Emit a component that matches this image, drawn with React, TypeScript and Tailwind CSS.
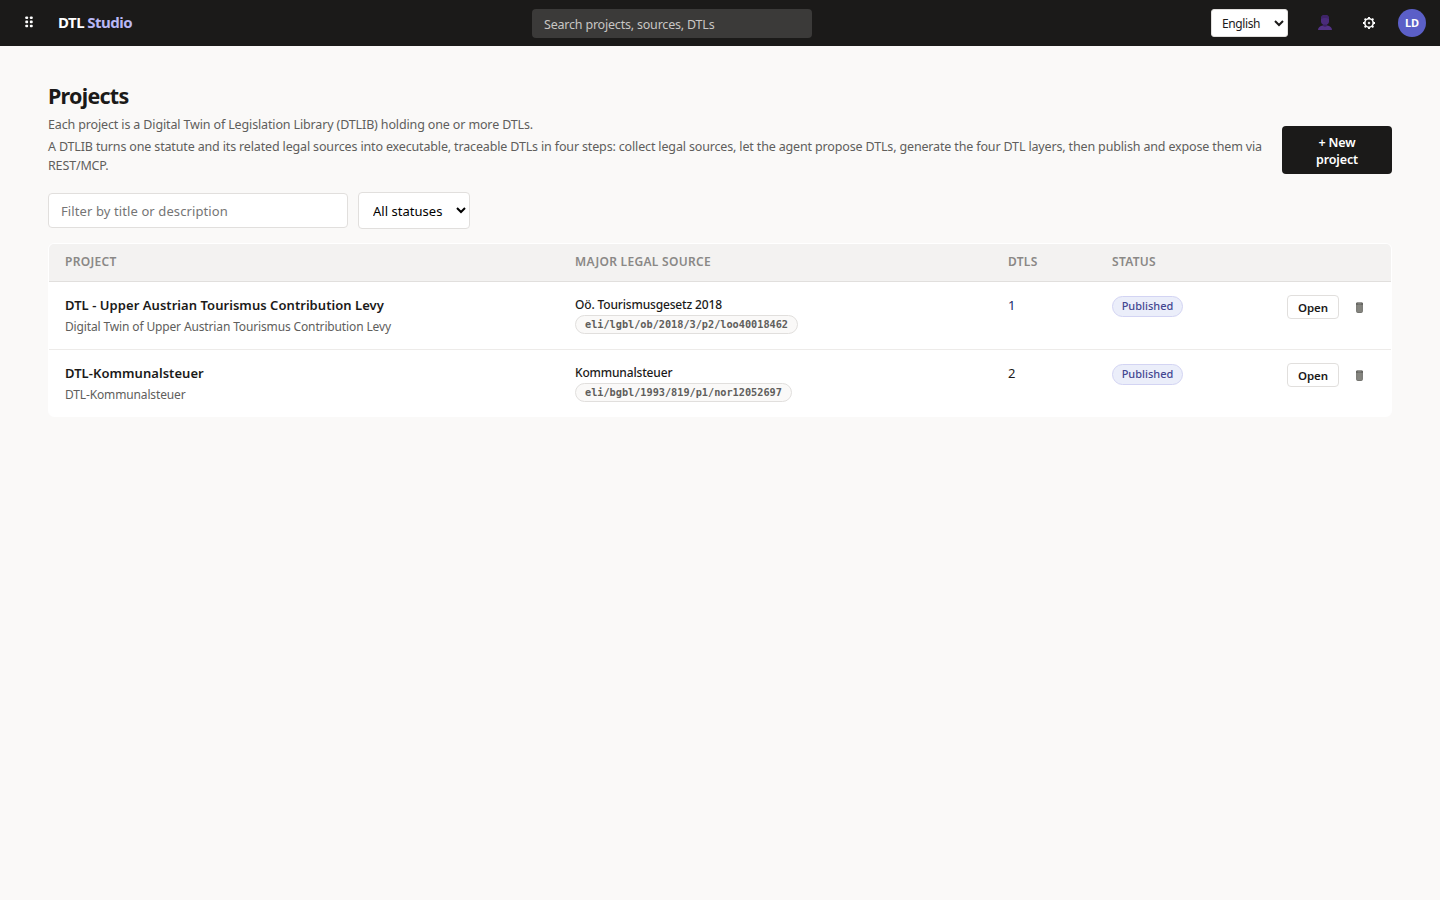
import React, { useState } from 'react'

const projects = [
  {
    id: 1,
    title: 'DTL - Upper Austrian Tourismus Contribution Levy',
    description: 'Digital Twin of Upper Austrian Tourismus Contribution Levy',
    source: 'Oö. Tourismusgesetz 2018',
    eli: 'eli/lgbl/ob/2018/3/p2/loo40018462',
    dtls: 1,
    status: 'Published',
  },
  {
    id: 2,
    title: 'DTL-Kommunalsteuer',
    description: 'DTL-Kommunalsteuer',
    source: 'Kommunalsteuer',
    eli: 'eli/bgbl/1993/819/p1/nor12052697',
    dtls: 2,
    status: 'Published',
  },
]

const GridIcon = () => (
  <svg width="8" height="12" viewBox="0 0 8 12" fill="#fff">
    <rect x="0.3" y="0.5" width="2.8" height="2.6" rx="0.8" />
    <rect x="4.9" y="0.5" width="2.8" height="2.6" rx="0.8" />
    <rect x="0.3" y="4.6" width="2.8" height="2.6" rx="0.8" />
    <rect x="4.9" y="4.6" width="2.8" height="2.6" rx="0.8" />
    <rect x="0.3" y="8.7" width="2.8" height="2.6" rx="0.8" />
    <rect x="4.9" y="8.7" width="2.8" height="2.6" rx="0.8" />
  </svg>
)

const UserIcon = () => (
  <svg width="14" height="15" viewBox="0 0 14 15">
    <path d="M0 15c0-2.6 2.2-4 4.6-4.4h4.8C11.8 11 14 12.4 14 15z" fill="#533285" />
    <path d="M5 8h4v3c-1 1-3 1-4 0z" fill="#3b2064" />
    <rect x="3" y="0" width="8" height="9.6" rx="3.4" fill="#4a2b7a" />
    <path d="M3 4c0-3 1.6-4 4-4s4 1 4 4c-2-1.5-6-1.5-8 0z" fill="#3f2469" />
  </svg>
)

const GearIcon = () => (
  <svg width="12" height="12" viewBox="0 0 12 12" fill="none" stroke="#fff">
    <circle cx="6" cy="6" r="4.2" strokeWidth="1.6" />
    <circle cx="6" cy="6" r="1" fill="#fff" strokeWidth="0.4" />
    <path
      d="M6 0v1.8M6 10.2v1.8M0 6h1.8M10.2 6h1.8M1.6 1.6l1.3 1.3M9.1 9.1l1.3 1.3M1.6 10.4l1.3-1.3M9.1 2.9l1.3-1.3"
      strokeWidth="1.9"
    />
  </svg>
)

const TrashIcon = () => (
  <svg width="7" height="11" viewBox="0 0 7 11">
    <path d="M0.6 1.2h5.8v8.4q0 0.9-0.9 0.9h-4q-0.9 0-0.9-0.9z" fill="#85857f" stroke="#6b6b67" strokeWidth="0.9" />
    <path d="M0.2 1.3q0-0.9 0.9-0.9h4.8q0.9 0 0.9 0.9v1.8h-6.6z" fill="#5f5f5b" />
    <path d="M1.5 1.9h4" stroke="#a5a5a0" strokeWidth="0.7" />
  </svg>
)

const App = () => {
  const [search, setSearch] = useState('')
  const [filter, setFilter] = useState('')

  const rows = projects.filter((p) =>
    (p.title + p.description).toLowerCase().includes(filter.toLowerCase())
  )

  return (
    <div className="min-h-screen bg-[#faf9f8] font-['Noto_Sans',sans-serif] text-[#1b1a19]">
      {/* top bar */}
      <header className="flex h-[46px] items-center bg-[#1b1a19] pl-[25px] pr-[14px]">
        <button className="mt-[-2px]">
          <GridIcon />
        </button>
        <div className="ml-[25px] w-[474px] whitespace-nowrap pb-0.5 text-[15px] font-bold leading-5 tracking-[-0.53px] text-white">
          DTL <span className="text-[#b9b8f5]">Studio</span>
        </div>
        <input
          value={search}
          onChange={(e) => setSearch(e.target.value)}
          placeholder="Search projects, sources, DTLs"
          className="mt-px h-[29px] w-[280px] rounded-[4px] bg-[#3b3a39] px-3 pt-px text-[12.5px] tracking-[-0.2px] text-white outline-none placeholder:text-[#c8c6c4]"
        />
        <select className="ml-auto h-7 w-[77px] rounded-[3px] border border-[#e1dfdd] bg-white px-1.5 pt-px text-[12px] tracking-[-0.4px] text-[#1b1a19]">
          <option>English</option>
          <option>Deutsch</option>
        </select>
        <button className="ml-[30px] mt-[-1px]">
          <UserIcon />
        </button>
        <button className="ml-[31px] mt-[-1px]">
          <GearIcon />
        </button>
        <div className="ml-[23px] flex h-7 w-7 items-center justify-center rounded-full bg-[#5b5fc7] pt-px text-[11px] font-bold tracking-[-0.2px] text-white">
          LD
        </div>
      </header>

      <main className="px-12 pt-[35px]">
        <div className="flex items-center justify-between">
          <div className="w-[1218px]">
            <h1 className="text-[21.5px] font-bold leading-[30px] tracking-[-0.75px]">Projects</h1>
            <p className="mt-1 text-[12.5px] leading-[19px] tracking-[-0.14px] text-[#605e5c]">
              Each project is a Digital Twin of Legislation Library (DTLIB) holding one or more DTLs.
            </p>
            <p className="mt-[3px] text-[12.5px] leading-[19px] tracking-[-0.152px] text-[#605e5c]">
              A DTLIB turns one statute and its related legal sources into executable, traceable DTLs in four steps: collect
              legal sources, let the agent propose DTLs, generate the four DTL layers, then publish and expose them via
              REST/MCP.
            </p>
          </div>
          <button className="mt-[44px] h-12 w-[110px] rounded-[4px] bg-[#1b1a19] px-5 pt-px text-[12.5px] font-semibold leading-[17px] tracking-[-0.12px] text-white">
            + New project
          </button>
        </div>

        {/* filters */}
        <div className="mt-[17px] flex items-center gap-2.5">
          <input
            value={filter}
            onChange={(e) => setFilter(e.target.value)}
            placeholder="Filter by title or description"
            className="h-[35px] w-[300px] rounded-[4px] border border-[#e1dfdd] bg-white px-3 pt-px text-[13px] tracking-[0.1px] outline-none placeholder:text-[#757575]"
          />
          <select className="h-[37px] w-[112px] rounded-[4px] border border-[#e1dfdd] bg-white px-2.5 text-[13px] tracking-[0.03px] text-black">
            <option>All statuses</option>
            <option>Draft</option>
            <option>Published</option>
          </select>
        </div>

        {/* project list */}
        <div className="mt-3.5 overflow-hidden rounded-[6px] border border-white bg-white">
          <table className="w-full table-fixed border-collapse text-left">
            <thead>
              <tr className="h-[37px] border-b border-[#e1dfdd] bg-[#f3f2f1] text-[12px] leading-4 tracking-[0.3px] text-[#8a8886]">
                <th className="w-[510px] px-4 pb-px font-semibold">PROJECT</th>
                <th className="w-[433px] px-4 pb-px font-semibold">MAJOR LEGAL SOURCE</th>
                <th className="w-[104px] px-4 pb-px font-semibold">DTLS</th>
                <th className="w-[175px] px-4 pb-px font-semibold">STATUS</th>
                <th></th>
              </tr>
            </thead>
            <tbody>
              {rows.map((p) => (
                <tr key={p.id} className="h-[68px] border-b border-[#edebe9] align-top last:h-[67px] last:border-b-0">
                  <td className="px-4 pt-3">
                    <div className="text-[13px] font-semibold leading-[22px] tracking-[0.05px]">{p.title}</div>
                    <div className="mt-px text-[12px] leading-5 tracking-[-0.14px] text-[#605e5c]">{p.description}</div>
                  </td>
                  <td className="px-4 pt-[13px]">
                    <div className="text-[12px] font-medium leading-5 tracking-[-0.16px]">{p.source}</div>
                    <div className="flex h-[19px] w-fit items-center rounded-full border border-[#e1dfdd] bg-[#faf9f8] px-[9px] pt-px font-['DejaVu_Sans_Mono',monospace] text-[10.25px] font-bold tracking-[-0.02px] text-[#605e5c]">
                      {p.eli}
                    </div>
                  </td>
                  <td className={p.dtls === 1 ? 'px-4 pt-3 text-[13px] leading-[22px] text-[#1b2a6b]' : 'px-4 pt-3 text-[13px] leading-[22px]'}>
                    {p.dtls}
                  </td>
                  <td className="px-4 pt-3.5">
                    <span className="flex h-[21px] w-[71px] items-center justify-center rounded-full border border-[#d3d4f3] bg-[#ebeefa] text-[11px] font-medium text-[#444791]">
                      {p.status}
                    </span>
                  </td>
                  <td className="pl-4 pt-[13px]">
                    <div className="flex items-center">
                      <button className="h-6 w-[52px] rounded-[4px] border border-[#e1dfdd] bg-white pt-0.5 text-[11.5px] font-semibold leading-5 tracking-[-0.1px]">
                        Open
                      </button>
                      <button className="ml-[17px] pt-px">
                        <TrashIcon />
                      </button>
                    </div>
                  </td>
                </tr>
              ))}
            </tbody>
          </table>
        </div>
      </main>
    </div>
  )
}

export default App
